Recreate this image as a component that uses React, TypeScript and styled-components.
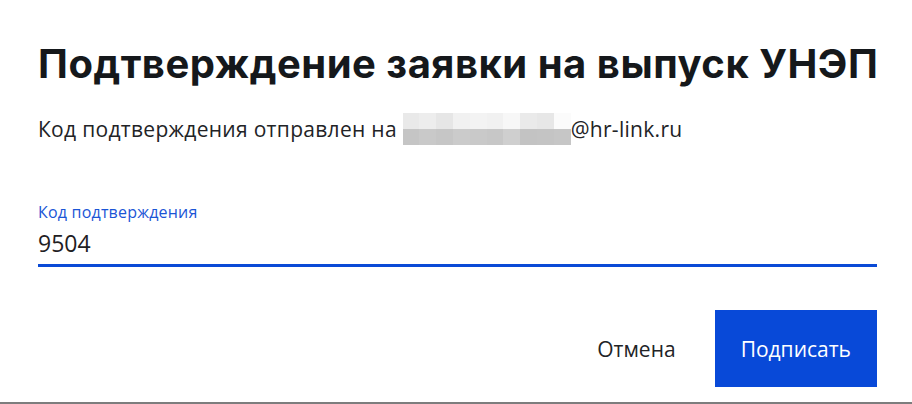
import styled, { createGlobalStyle } from "styled-components";

const GlobalStyle = createGlobalStyle`
    html, body {
        margin: 0;
        padding: 0;
        background: #ffffff;
    }
`

const blurTop = ["#e9e9e9", "#ededed", "#e6e6e6", "#f1f1f1", "#f3f3f3", "#f1f1f1", "#f7f7f7", "#eaeaea", "#e7e7e7", "#fbfbfb"];
const blurBottom = ["#c5c5c5", "#c9c9c9", "#c6c6c6", "#cbcbcb", "#c9c9c9", "#c7c7c7", "#cfcfcf", "#c3c3c3", "#c4c4c4", "#c6c6c6"];

const App = () => {
    return (
        <>
            <GlobalStyle />
            <DialogContainer>
                <DialogTitle>Подтверждение заявки на выпуск УНЭП</DialogTitle>
                <DialogText>
                    Код подтверждения отправлен на{" "}
                    <BlurredEmail>
                        <BlurGrid>
                            {blurTop.map((c, i) => <BlurCell key={"t" + i} $color={c} />)}
                            {blurBottom.map((c, i) => <BlurCell key={"b" + i} $color={c} />)}
                        </BlurGrid>
                    </BlurredEmail>
                    @hr-link.ru
                </DialogText>
                <CodeField>
                    <CodeLabel htmlFor="code">Код подтверждения</CodeLabel>
                    <CodeInput id="code" type="text" defaultValue="9504" />
                </CodeField>
                <ButtonContainer>
                    <Button>Отмена</Button>
                    <Button $primary>Подписать</Button>
                </ButtonContainer>
            </DialogContainer>
        </>
    )
}

export default App;

const DialogContainer = styled.section`
    box-sizing: border-box;
    width: 912px;
    height: 404px;
    display: flex;
    flex-direction: column;
    padding: 40px 35px 0 38px;
    border-bottom: 2px solid #7d7d7d;
    font-family: "Open Sans", "Noto Sans", sans-serif;
    color: #1f2022;
`

const DialogTitle = styled.h2`
    margin: 0;
    font-family: Inter, "Noto Sans", sans-serif;
    font-weight: 700;
    font-size: 40px;
    line-height: 48px;
    letter-spacing: 0.5px;
    color: #15181b;
    white-space: nowrap;
`

const DialogText = styled.p`
    margin: 29px 0 0 0;
    font-size: 21px;
    line-height: 24px;
    letter-spacing: 0.3px;
    color: #222326;
    white-space: nowrap;
`

const BlurredEmail = styled.span`
    display: inline-block;
    overflow: hidden;
    vertical-align: -6px;
    margin: -7px 0 -2px 0;
`

const BlurGrid = styled.span`
    display: grid;
    grid-template-columns: repeat(10, 16.8px);
    grid-template-rows: 16px 16px;
`

const BlurCell = styled.span<{ $color: string }>`
    background: ${({ $color }) => $color};
`

const CodeField = styled.div`
    display: flex;
    flex-direction: column;
    margin-top: 59px;
`

const CodeLabel = styled.label`
    font-size: 16px;
    line-height: 20px;
    letter-spacing: 0.2px;
    color: #1a55d6;
`

const CodeInput = styled.input`
    box-sizing: border-box;
    margin-top: 7px;
    height: 38px;
    padding: 0 0 7px 0;
    border: none;
    border-bottom: 3px solid #0a4ad6;
    outline: none;
    background: transparent;
    font-family: "Open Sans", "Noto Sans", sans-serif;
    font-size: 23px;
    color: #1f2022;
`

const ButtonContainer = styled.div`
    display: flex;
    justify-content: flex-end;
    align-items: center;
    gap: 19px;
    margin-top: 43px;
`

const Button = styled.button<{ $primary?: boolean }>`
    height: 77px;
    padding: 0 ${({ $primary }) => ($primary ? "26px" : "20px")};
    border: none;
    border-radius: 0;
    background-color: ${({ $primary }) => ($primary ? "#0849d8" : "transparent")};
    color: ${({ $primary }) => ($primary ? "#ffffff" : "#222326")};
    font-family: "Open Sans", "Noto Sans", sans-serif;
    font-size: 21px;
    cursor: pointer;
`
